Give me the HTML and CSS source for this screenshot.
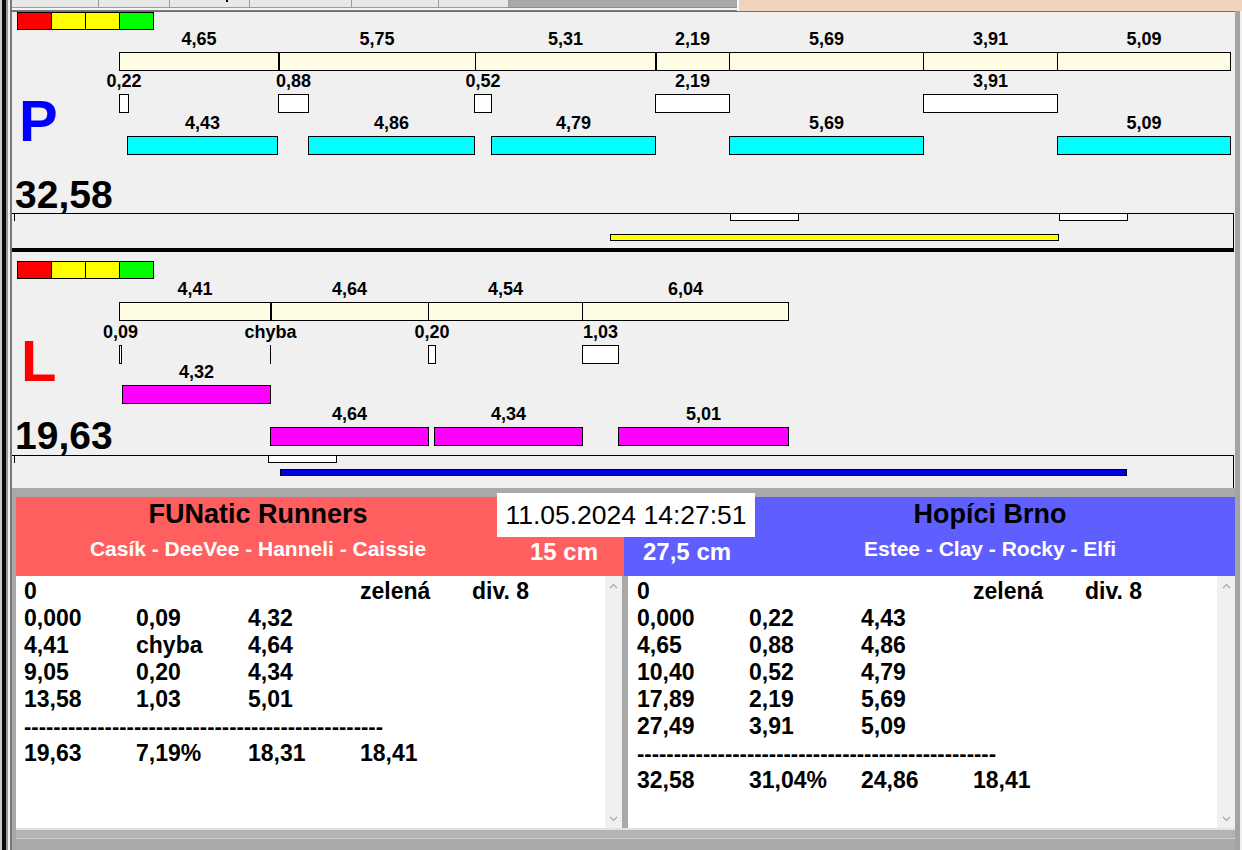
FILE: index.html
```html
<!DOCTYPE html>
<html>
<head>
<meta charset="utf-8">
<title>Agility</title>
<link rel="stylesheet" href="styles.css">
</head>
<body>
<div class="app">
  <div class="edge"></div>
  <div class="main">
    <div class="topstrip">
      <div class="tabs">
        <div class="tab" style="width:87px"></div>
        <div class="tab" style="width:71px"></div>
        <div class="tab" style="width:80px"><span class="tabmark"></span></div>
        <div class="tab" style="width:102px"></div>
        <div class="tab" style="width:87px"></div>
        <div class="tab" style="width:70px"></div>
        <div class="tabfill"></div>
      </div>
      <div class="peach"></div>
    </div>
    <div class="frame">
      <!-- P panel -->
      <div class="panel panel-p">
        <div class="lights"><span class="c-red"></span><span class="c-yel"></span><span class="c-yel"></span><span class="c-grn"></span></div>

        <div class="seg r1" style="left:107px;width:160px"><span class="lbl">4,65</span><i class="bar cream"></i></div>
        <div class="seg r1" style="left:266px;width:198px"><span class="lbl">5,75</span><i class="bar cream thk"></i></div>
        <div class="seg r1" style="left:463px;width:181px"><span class="lbl">5,31</span><i class="bar cream"></i></div>
        <div class="seg r1" style="left:643px;width:75px"><span class="lbl">2,19</span><i class="bar cream thk"></i></div>
        <div class="seg r1" style="left:717px;width:195px"><span class="lbl">5,69</span><i class="bar cream"></i></div>
        <div class="seg r1" style="left:911px;width:135px"><span class="lbl">3,91</span><i class="bar cream"></i></div>
        <div class="seg r1" style="left:1045px;width:174px"><span class="lbl">5,09</span><i class="bar cream"></i></div>

        <div class="seg r2" style="left:107px;width:10px"><span class="lbl">0,22</span><i class="bar white"></i></div>
        <div class="seg r2" style="left:266px;width:31px"><span class="lbl">0,88</span><i class="bar white"></i></div>
        <div class="seg r2" style="left:462px;width:18px"><span class="lbl">0,52</span><i class="bar white"></i></div>
        <div class="seg r2" style="left:643px;width:75px"><span class="lbl">2,19</span><i class="bar white"></i></div>
        <div class="seg r2" style="left:911px;width:135px"><span class="lbl">3,91</span><i class="bar white"></i></div>

        <div class="seg r3" style="left:115px;width:151px"><span class="lbl">4,43</span><i class="bar cyan"></i></div>
        <div class="seg r3" style="left:296px;width:167px"><span class="lbl">4,86</span><i class="bar cyan"></i></div>
        <div class="seg r3" style="left:479px;width:165px"><span class="lbl">4,79</span><i class="bar cyan"></i></div>
        <div class="seg r3" style="left:717px;width:195px"><span class="lbl">5,69</span><i class="bar cyan"></i></div>
        <div class="seg r3" style="left:1045px;width:174px"><span class="lbl">5,09</span><i class="bar cyan"></i></div>

        <div class="big letter-p">P</div>
        <div class="total">32,58</div>

        <div class="box">
          <span class="tick"></span>
          <span class="wbox" style="left:718px;width:69px"></span>
          <span class="wbox" style="left:1047px;width:69px"></span>
          <span class="line yellow" style="left:598px;width:449px"></span>
        </div>
      </div>

      <!-- L panel -->
      <div class="panel panel-l">
        <div class="lights"><span class="c-red"></span><span class="c-yel"></span><span class="c-yel"></span><span class="c-grn"></span></div>

        <div class="seg r1" style="left:107px;width:152px"><span class="lbl">4,41</span><i class="bar cream"></i></div>
        <div class="seg r1" style="left:258px;width:159px"><span class="lbl">4,64</span><i class="bar cream thk"></i></div>
        <div class="seg r1" style="left:416px;width:155px"><span class="lbl">4,54</span><i class="bar cream"></i></div>
        <div class="seg r1" style="left:570px;width:207px"><span class="lbl">6,04</span><i class="bar cream"></i></div>

        <div class="seg r2" style="left:107px;width:3px"><span class="lbl">0,09</span><i class="bar white"></i></div>
        <div class="seg r2" style="left:258px;width:1px"><span class="lbl">chyba</span><i class="bar tickbar"></i></div>
        <div class="seg r2" style="left:416px;width:8px"><span class="lbl">0,20</span><i class="bar white"></i></div>
        <div class="seg r2" style="left:570px;width:37px"><span class="lbl">1,03</span><i class="bar white"></i></div>

        <div class="seg r3" style="left:110px;width:149px"><span class="lbl">4,32</span><i class="bar mag"></i></div>

        <div class="seg r4" style="left:258px;width:159px"><span class="lbl">4,64</span><i class="bar mag"></i></div>
        <div class="seg r4" style="left:422px;width:149px"><span class="lbl">4,34</span><i class="bar mag"></i></div>
        <div class="seg r4" style="left:606px;width:171px"><span class="lbl">5,01</span><i class="bar mag"></i></div>

        <div class="big letter-l">L</div>
        <div class="total">19,63</div>

        <div class="box">
          <span class="tick"></span>
          <span class="wbox" style="left:256px;width:69px"></span>
          <span class="line blue" style="left:268px;width:847px"></span>
        </div>
      </div>

      <!-- bottom -->
      <div class="bottom">
        <div class="headers">
          <div class="team red">
            <div class="names">
              <div class="tname">FUNatic Runners</div>
              <div class="members">Casík - DeeVee - Hanneli - Caissie</div>
            </div>
            <div class="cm">15 cm</div>
          </div>
          <div class="team blue">
            <div class="cm">27,5 cm</div>
            <div class="names">
              <div class="tname">Hopíci Brno</div>
              <div class="members">Estee - Clay - Rocky - Elfi</div>
            </div>
          </div>
        </div>
        <div class="date">11.05.2024 14:27:51</div>
        <div class="panes">
          <div class="pane pane-l">
            <div class="text">
              <div class="row"><span>0</span><span></span><span></span><span>zelená</span><span>div. 8</span></div>
              <div class="row"><span>0,000</span><span>0,09</span><span>4,32</span></div>
              <div class="row"><span>4,41</span><span>chyba</span><span>4,64</span></div>
              <div class="row"><span>9,05</span><span>0,20</span><span>4,34</span></div>
              <div class="row"><span>13,58</span><span>1,03</span><span>5,01</span></div>
              <div class="row"><span class="dash">-------------------------------------------------</span></div>
              <div class="row"><span>19,63</span><span>7,19%</span><span>18,31</span><span>18,41</span></div>
            </div>
            <div class="scroll">
              <svg width="9" height="6" viewBox="0 0 9 6"><path d="M1 5 L4.5 1.5 L8 5" fill="none" stroke="#a6a6a6" stroke-width="1.2"/></svg>
              <svg width="9" height="6" viewBox="0 0 9 6"><path d="M1 1 L4.5 4.5 L8 1" fill="none" stroke="#a6a6a6" stroke-width="1.2"/></svg>
            </div>
          </div>
          <div class="pane pane-r">
            <div class="text">
              <div class="row"><span>0</span><span></span><span></span><span>zelená</span><span>div. 8</span></div>
              <div class="row"><span>0,000</span><span>0,22</span><span>4,43</span></div>
              <div class="row"><span>4,65</span><span>0,88</span><span>4,86</span></div>
              <div class="row"><span>10,40</span><span>0,52</span><span>4,79</span></div>
              <div class="row"><span>17,89</span><span>2,19</span><span>5,69</span></div>
              <div class="row"><span>27,49</span><span>3,91</span><span>5,09</span></div>
              <div class="row"><span class="dash">-------------------------------------------------</span></div>
              <div class="row"><span>32,58</span><span>31,04%</span><span>24,86</span><span>18,41</span></div>
            </div>
            <div class="scroll">
              <svg width="9" height="6" viewBox="0 0 9 6"><path d="M1 5 L4.5 1.5 L8 5" fill="none" stroke="#a6a6a6" stroke-width="1.2"/></svg>
              <svg width="9" height="6" viewBox="0 0 9 6"><path d="M1 1 L4.5 4.5 L8 1" fill="none" stroke="#a6a6a6" stroke-width="1.2"/></svg>
            </div>
          </div>
        </div>
        <div class="footer"></div>
      </div>
    </div>
  </div>
</div>
</body>
</html>
```

FILE: styles.css
```css
* { box-sizing: border-box; }
html, body { margin: 0; padding: 0; }
body {
  width: 1242px;
  height: 850px;
  overflow: hidden;
  background: #f0f0f0;
  font-family: "Liberation Sans", Arial, sans-serif;
  color: #000;
}
.app { display: flex; height: 850px; }
.edge {
  width: 12px;
  flex: none;
  background: linear-gradient(to right, #c8c8c8 0 2px, #0a0a0a 2px 6px, #9a9a9a 6px 8px, #f0f0f0 8px 10px, #777 10px 12px);
}
.main { flex: 1; display: flex; flex-direction: column; min-width: 0; }

/* top strip */
.topstrip { height: 11px; flex: none; display: flex; }
.tabs { width: 725px; display: flex; background: #f4f4f4; border-bottom: 1px solid #7a7a7a; }
.tab { position: relative; height: 8px; background: #e8e8e8; border-right: 1px solid #9c9c9c; border-bottom: 1px solid #9c9c9c; }
.tabmark { position: absolute; left: 56px; top: 0; width: 2px; height: 2px; background: #000; }
.tabfill { flex: 1; height: 8px; background: #a9a9a9; border-bottom: 1px solid #8c8c8c; }
.peach { flex: 1; background: #efd3bd; border-left: 2px solid #f6f6f6; }

/* frame */
.frame {
  flex: 1;
  display: flex;
  flex-direction: column;
  border-right: 5px solid #a3a3a3;
  margin-right: 2px;
}
.panel { position: relative; flex: none; background: #f0f0f0; }
.panel-p { height: 241px; box-shadow: inset 0 1px 0 #707070; }
.panel-l { height: 236px; }

.lights {
  position: absolute;
  left: 5px;
  display: flex;
  height: 18px;
  border: 1px solid #000;
}
.panel-p .lights { top: 1px; }
.panel-l .lights { top: 9px; }
.lights span { width: 34px; border-left: 1px solid #000; }
.lights span:first-child { width: 33px; border-left: 0; }
.c-red { background: #ff0000; }
.c-yel { background: #ffff00; }
.c-grn { background: #00ff00; }

.seg {
  position: absolute;
  display: flex;
  flex-direction: column;
  align-items: center;
}
.lbl {
  font-size: 18px;
  font-weight: bold;
  line-height: 22px;
  height: 22px;
  white-space: nowrap;
}
.bar {
  display: block;
  align-self: stretch;
  height: 19px;
  margin-top: 2px;
  border: 1px solid #000;
}
.cream { background: #fffce4; }
.white { background: #ffffff; }
.cyan { background: #00ffff; }
.mag { background: #ff00ff; }
.thk { border-left-width: 2px; }
.tickbar { border: 0; border-left: 1px solid #000; }

.panel-p .r1 { top: 17px; }
.panel-p .r2 { top: 59px; }
.panel-p .r3 { top: 101px; }
.panel-l .r1 { top: 26px; }
.panel-l .r2 { top: 69px; }
.panel-l .r3 { top: 109px; }
.panel-l .r4 { top: 151px; }

.big {
  position: absolute;
  font-size: 58px;
  font-weight: bold;
  line-height: 58px;
}
.letter-p { color: #0000ff; left: 7px; top: 81px; }
.letter-l { color: #ff0000; left: 9px; top: 80px; }
.total {
  position: absolute;
  left: 3px;
  top: 164px;
  font-size: 39px;
  font-weight: bold;
  line-height: 40px;
}

.box {
  position: absolute;
  left: 0;
  width: 1222px;
  border-top: 1px solid #000;
  border-right: 1px solid #000;
}
.panel-p .box { top: 202px; height: 39px; border-bottom: 4px solid #000; }
.panel-l .box { top: 203px; height: 33px; }
.tick { position: absolute; left: 2px; top: 0; width: 1px; height: 7px; background: #000; }
.wbox { position: absolute; top: -1px; height: 8px; background: #fff; border: 1px solid #000; }
.line { position: absolute; height: 7px; border: 1px solid #000; }
.line.yellow { top: 20px; background: #ffff00; }
.line.blue { top: 13px; background: #0000e8; }

/* bottom */
.bottom {
  flex: 1;
  position: relative;
  background: #a9a9a9;
  padding: 9px 0 0 4px;
  display: flex;
  flex-direction: column;
}
.headers { display: flex; height: 79px; flex: none; }
.team { display: flex; }
.team.red { width: 608px; background: #ff5f5f; }
.team.blue { flex: 1; background: #5f5fff; }
.names { display: flex; flex-direction: column; align-items: center; }
.team.red .names { width: 484px; }
.team.blue .names { flex: 1; padding-right: 10px; }
.tname { font-size: 27px; font-weight: bold; line-height: 34px; white-space: nowrap; }
.members { font-size: 21px; font-weight: bold; line-height: 30px; margin-top: 3px; color: #fff; white-space: nowrap; }
.cm { font-size: 24px; font-weight: bold; line-height: 30px; color: #fff; padding-top: 40px; white-space: nowrap; }
.team.red .cm { flex: 1; text-align: right; padding-right: 26px; }
.team.blue .cm { width: 131px; padding-left: 19px; }

.date {
  position: absolute;
  left: 485px;
  top: 5px;
  width: 258px;
  height: 44px;
  background: #fff;
  font-size: 26.5px;
  line-height: 44px;
  text-align: center;
  white-space: nowrap;
}

.panes { display: flex; gap: 6px; height: 252px; flex: none; }
.pane { display: flex; background: #fff; }
.pane-l { width: 606px; }
.pane-r { flex: 1; }
.text { flex: 1; padding: 2px 0 0 8px; font-size: 23px; font-weight: bold; overflow: hidden; }
.pane-r .text { padding-left: 9px; }
.row {
  display: grid;
  grid-template-columns: repeat(5, 112px);
  height: 27px;
  line-height: 27px;
  white-space: nowrap;
}
.dash { grid-column: 1 / -1; font-size: 22px; }
.scroll {
  width: 17px;
  background: #f0f0f0;
  display: flex;
  flex-direction: column;
  justify-content: space-between;
  align-items: center;
  padding: 7px 0 6px;
}
.pane-r .scroll { width: 18px; }

.footer {
  flex: 1;
  border-top: 2px solid #e2e2e2;
  background: linear-gradient(to bottom, #b3b3b3 0 8px, #cdcdcd 8px 9px, #a9a9a9 9px);
}
```
